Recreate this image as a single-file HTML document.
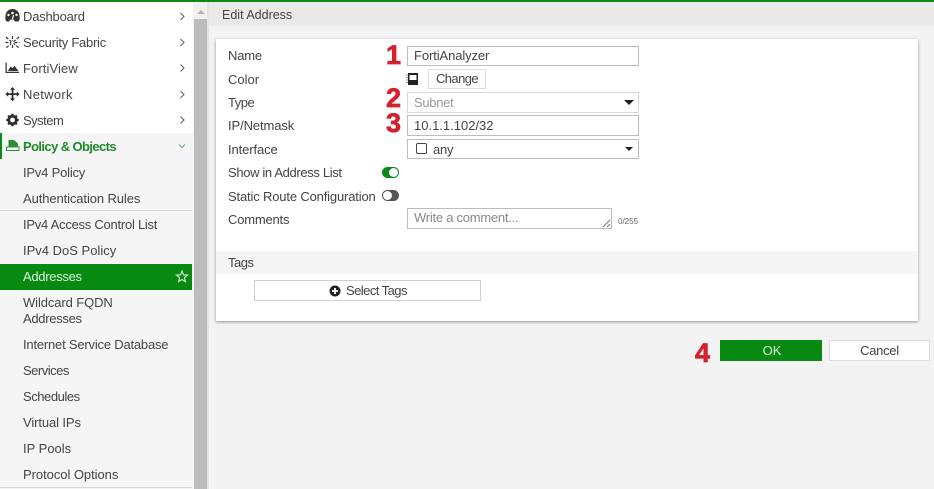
<!DOCTYPE html>
<html><head><meta charset="utf-8"><style>
html,body{margin:0;padding:0}
body{width:934px;height:489px;overflow:hidden;position:relative;background:#f3f3f3;font-family:"Liberation Sans",sans-serif;font-size:13px;color:#444}
.a{position:absolute;white-space:nowrap}
.t{position:absolute;white-space:nowrap;line-height:16px;height:16px}
.box{position:absolute;box-sizing:border-box;background:#fff;border:1px solid #bdbdbd}
.num{position:absolute;font-weight:bold;color:#d5202e;font-size:27px;line-height:28px;-webkit-text-stroke:.7px #d5202e}
svg{position:absolute;overflow:visible}
</style></head><body>
<div class="a" style="left:0;top:0;width:934px;height:2px;background:#0b8a1a;z-index:5"></div>

<!-- sidebar -->
<div class="a" style="left:0;top:2px;width:193px;height:131px;background:#fff"></div>
<div class="a" style="left:0;top:133px;width:193px;height:356px;background:#f5f5f5"></div>
<div class="a" style="left:0;top:133px;width:2px;height:26px;background:#0b8a1a"></div>
<div class="a" style="left:0;top:210px;width:192px;height:1px;background:#d6d6d6"></div>
<div class="a" style="left:0;top:487px;width:192px;height:1px;background:#d6d6d6"></div>
<div class="a" style="left:0;top:264px;width:192px;height:26px;background:#088a12"></div>

<!-- scrollbar -->
<div class="a" style="left:193px;top:2px;width:15px;height:487px;background:#f1f1f1"></div>
<div class="a" style="left:194px;top:19px;width:13px;height:470px;background:#bcbcbc"></div>
<div class="a" style="left:197px;top:10px;width:0;height:0;border-left:4px solid transparent;border-right:4px solid transparent;border-bottom:4px solid #b5b5b5"></div>
<div class="a" style="left:207px;top:2px;width:2px;height:487px;background:#e4e4e4"></div>

<div class="t" style="left:23px;top:9px;letter-spacing:-.2px">Dashboard</div>
<div class="t" style="left:23px;top:35px;letter-spacing:-.25px">Security Fabric</div>
<div class="t" style="left:23px;top:61px;letter-spacing:.1px">FortiView</div>
<div class="t" style="left:23px;top:87px;letter-spacing:.3px">Network</div>
<div class="t" style="left:23px;top:113px;letter-spacing:-.5px">System</div>
<div class="t" style="left:23px;top:139px;color:#1f8a2c;font-weight:bold;letter-spacing:-.6px">Policy &amp; Objects</div>
<div class="t" style="left:23px;top:165px;letter-spacing:-.2px">IPv4 Policy</div>
<div class="t" style="left:23px;top:191px;letter-spacing:-.1px">Authentication Rules</div>
<div class="t" style="left:23px;top:217px;letter-spacing:-.25px">IPv4 Access Control List</div>
<div class="t" style="left:23px;top:243px">IPv4 DoS Policy</div>
<div class="t" style="left:23px;top:269px;color:#d8f3d8;letter-spacing:-.3px">Addresses</div>
<div class="t" style="left:23px;top:295px;letter-spacing:-.1px">Wildcard FQDN</div>
<div class="t" style="left:23px;top:311px;letter-spacing:-.3px">Addresses</div>
<div class="t" style="left:23px;top:337px;letter-spacing:-.2px">Internet Service Database</div>
<div class="t" style="left:23px;top:363px;letter-spacing:-.5px">Services</div>
<div class="t" style="left:23px;top:389px;letter-spacing:-.45px">Schedules</div>
<div class="t" style="left:23px;top:415px;letter-spacing:-.1px">Virtual IPs</div>
<div class="t" style="left:23px;top:441px">IP Pools</div>
<div class="t" style="left:23px;top:467px;letter-spacing:-.05px">Protocol Options</div>

<!-- sidebar icons -->
<svg style="left:0;top:0" width="193" height="300" fill="none">
<g stroke="#666" stroke-width="1.100">
<path d="M180.500 13l3.500 3.500-3.500 3.500M180.500 39l3.500 3.500-3.500 3.500M180.500 64.500l3.500 3.500-3.500 3.500M180.500 91l3.500 3.500-3.500 3.500M180.500 116.500l3.500 3.500-3.500 3.500"/>
<path d="M179 144.500l3 3 3-3" stroke="#6aa572"/>
</g>
<!-- dashboard gauge -->
<path d="M5.800 20.500a7 7 0 0 1-.3-4.500a7 7 0 0 1 14 0a7 7 0 0 1-.3 4.500l-1 1h-3.200l-1.500-2h-3l-1.500 2H6.800z" fill="#333"/>
<circle cx="12.500" cy="13" r="1.300" fill="#fff"/><circle cx="8.500" cy="15" r="1.200" fill="#fff"/><circle cx="16.500" cy="15" r="1.200" fill="#fff"/>
<path d="M12.500 19l1-4" stroke="#fff" stroke-width="1.200"/>
<!-- fabric -->
<g stroke="#333" stroke-width="1.200" stroke-dasharray="3 1.500"><path d="M6 37l13 11M19 37L6 48M5.500 42.500h14M12.500 36v13"/></g>
<circle cx="12.500" cy="42.500" r="1.500" fill="#fff"/>
<!-- fortiview -->
<path d="M5.500 73V62.500h1.200V71.800h12.300V73z" fill="#333"/>
<path d="M8 71l2.500-4.500 2 1.500 2.200-2 3.800 5z" fill="#333"/>
<!-- network -->
<path d="M12.500 87l2.600 2.800h-1.700v3.400h3.400v-1.700L19.600 94.100l-2.800 2.600V95h-3.400v3.400h1.700l-2.600 2.800-2.600-2.800h1.700V95H8.200v1.700L5.400 94.100l2.800-2.600v1.700h3.400v-3.400H9.900z" fill="#2e2e2e"/>
<!-- gear -->
<circle cx="12.500" cy="120" r="3.800" stroke="#2e2e2e" stroke-width="2.800"/>
<path d="M12.500 113.800v2.500M12.500 123.700v2.500M6.300 120h2.500M16.200 120h2.500M8.100 115.600l1.800 1.800M15.100 122.600l1.800 1.800M8.100 124.400l1.800-1.800M15.100 117.400l1.800-1.800" stroke="#2e2e2e" stroke-width="2.200"/>
<!-- policy -->
<path d="M8.500 140h5.500l4 3.500v3h-9.500z" fill="#2b8f38"/>
<path d="M6.500 147h12.500v3.500H6.500z" fill="#fff" stroke="#2b8f38" stroke-width="1"/>
<path d="M182 271l1.500 3.800 4 .3-3.100 2.600 1 3.900-3.400-2.100-3.400 2.100 1-3.900-3.100-2.600 4-.3z" stroke="#d8f3d8" stroke-width="1.100"/>
</svg>

<!-- header -->
<div class="a" style="left:209px;top:2px;width:725px;height:24px;background:#e9e9e9"></div>
<div class="t" style="left:222px;top:7px;font-size:12.500px">Edit Address</div>

<!-- card -->
<div class="a" style="left:216px;top:39px;width:702px;height:282px;background:#fff;box-shadow:0 1px 3px rgba(0,0,0,.4)"></div>
<div class="a" style="left:216px;top:251px;width:702px;height:23px;background:#f5f5f5"></div>

<div class="t" style="left:228px;top:48px;letter-spacing:-.2px">Name</div>
<div class="t" style="left:228px;top:72px">Color</div>
<div class="t" style="left:228px;top:95px;letter-spacing:-.5px">Type</div>
<div class="t" style="left:228px;top:118px;letter-spacing:-.1px">IP/Netmask</div>
<div class="t" style="left:228px;top:142px;letter-spacing:-.1px">Interface</div>
<div class="t" style="left:228px;top:165px;letter-spacing:-.35px">Show in Address List</div>
<div class="t" style="left:228px;top:189px;letter-spacing:-.16px">Static Route Configuration</div>
<div class="t" style="left:228px;top:212px;letter-spacing:-.2px">Comments</div>
<div class="t" style="left:228px;top:255px;letter-spacing:-.5px">Tags</div>

<div class="num" style="left:386px;top:41px">1</div>
<div class="num" style="left:386px;top:84px">2</div>
<div class="num" style="left:386px;top:109px">3</div>
<div class="num" style="left:695px;top:339px">4</div>

<div class="box" style="left:407px;top:46px;width:232px;height:20px"></div>
<div class="t" style="left:414px;top:48px;letter-spacing:-.1px">FortiAnalyzer</div>

<svg style="left:405px;top:71px" width="14" height="16"><rect x="3" y="2" width="10" height="12" fill="#222"/><rect x="4.500" y="4" width="7" height="5" fill="#fff"/><path d="M1.500 4h1M1.500 6.500h1M1.500 9h1M1.500 11.500h1" stroke="#333"/></svg>
<div class="box" style="left:428px;top:69px;width:58px;height:20px;border-color:#ddd;text-align:center;line-height:18px;letter-spacing:-.6px">Change</div>

<div class="box" style="left:407px;top:92px;width:232px;height:21px;border-color:#d8d8d8"></div>
<div class="t" style="left:414px;top:95px;color:#999;letter-spacing:-.3px">Subnet</div>
<div class="a" style="left:624px;top:100px;width:0;height:0;border-left:5.500px solid transparent;border-right:5.500px solid transparent;border-top:5px solid #222"></div>

<div class="box" style="left:407px;top:115px;width:232px;height:21px"></div>
<div class="t" style="left:414px;top:118px">10.1.1.102/32</div>

<div class="box" style="left:407px;top:139px;width:232px;height:20px"></div>
<div class="a" style="left:416px;top:143px;width:11px;height:11px;box-sizing:border-box;border:1.300px solid #444;border-radius:2px"></div>
<div class="t" style="left:433px;top:142px;letter-spacing:-.2px">any</div>
<div class="a" style="left:625px;top:147px;width:0;height:0;border-left:4.500px solid transparent;border-right:4.500px solid transparent;border-top:4px solid #222"></div>

<div class="a" style="left:382px;top:167px;width:17px;height:11px;border-radius:6px;background:#0b8a1a"></div>
<div class="a" style="left:389px;top:168px;width:9px;height:9px;border-radius:50%;background:#fff"></div>
<div class="a" style="left:382px;top:190px;width:17px;height:11px;border-radius:6px;background:#555"></div>
<div class="a" style="left:383px;top:191px;width:9px;height:9px;border-radius:50%;background:#fff"></div>

<div class="box" style="left:407px;top:208px;width:205px;height:21px"></div>
<div class="t" style="left:414px;top:210px;color:#888;letter-spacing:-.25px">Write a comment...</div>
<svg style="left:602px;top:219px" width="10" height="10" fill="none" stroke="#777"><path d="M1 8l7-7M5 8l3-3"/></svg>
<div class="t" style="left:618px;top:214px;font-size:8px;color:#666">0/255</div>

<div class="box" style="left:254px;top:280px;width:227px;height:21px;border-color:#d0d0d0"></div>
<svg style="left:329px;top:285px" width="12" height="12"><circle cx="6" cy="6" r="5.500" fill="#222"/><path d="M6 3v6M3 6h6" stroke="#fff" stroke-width="1.800"/></svg>
<div class="t" style="left:346px;top:283px;letter-spacing:-.55px">Select Tags</div>

<div class="a" style="left:720px;top:340px;width:102px;height:21px;background:#088a12;color:#d8f3d8;text-align:center;line-height:21px;text-indent:2px">OK</div>
<div class="box" style="left:829px;top:340px;width:101px;height:21px;border-color:#ddd;text-align:center;line-height:20px;letter-spacing:-.3px">Cancel</div>
</body></html>
